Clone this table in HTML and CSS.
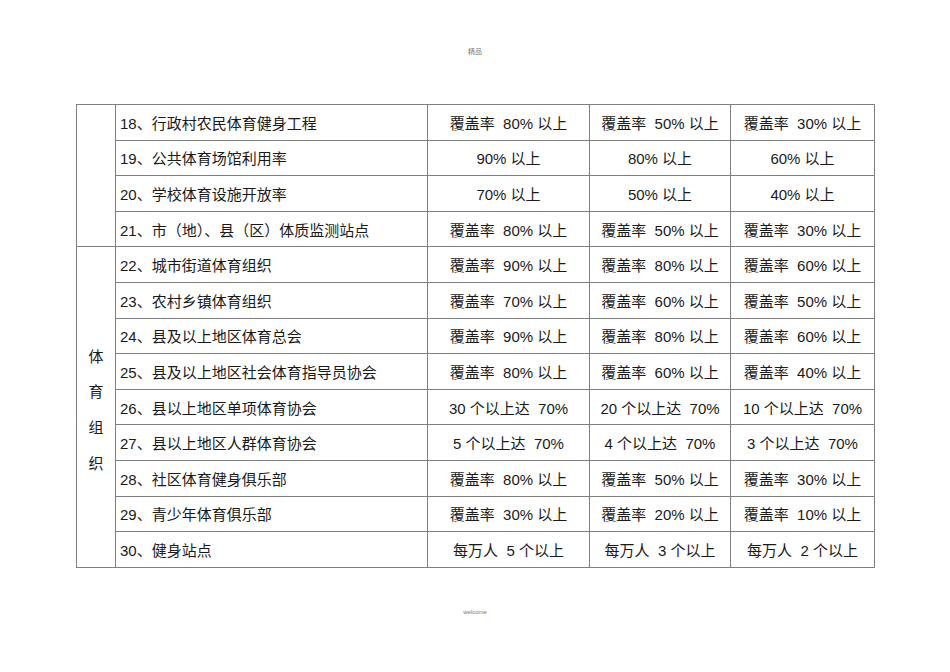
FILE: index.html
```html
<!DOCTYPE html>
<html lang="zh">
<head>
<meta charset="utf-8">
<title>体育组织</title>
<link rel="stylesheet" href="styles.css">
</head>
<body>
<div class="page">
  <div class="head-note">精品</div>
  <table class="grid">
    <colgroup>
      <col class="c1"><col class="c2"><col class="c3"><col class="c4"><col class="c5">
    </colgroup>
    <tbody>
      <tr><td class="cat" rowspan="4"></td><td class="item">18、行政村农民体育健身工程</td><td>覆盖率&nbsp; 80% 以上</td><td>覆盖率&nbsp; 50% 以上</td><td>覆盖率&nbsp; 30% 以上</td></tr>
      <tr><td class="item">19、公共体育场馆利用率</td><td>90% 以上</td><td>80% 以上</td><td>60% 以上</td></tr>
      <tr><td class="item">20、学校体育设施开放率</td><td>70% 以上</td><td>50% 以上</td><td>40% 以上</td></tr>
      <tr><td class="item">21、市（地）、县（区）体质监测站点</td><td>覆盖率&nbsp; 80% 以上</td><td>覆盖率&nbsp; 50% 以上</td><td>覆盖率&nbsp; 30% 以上</td></tr>
      <tr><td class="cat" rowspan="9"><div class="vert">体<br>育<br>组<br>织</div></td><td class="item">22、城市街道体育组织</td><td>覆盖率&nbsp; 90% 以上</td><td>覆盖率&nbsp; 80% 以上</td><td>覆盖率&nbsp; 60% 以上</td></tr>
      <tr><td class="item">23、农村乡镇体育组织</td><td>覆盖率&nbsp; 70% 以上</td><td>覆盖率&nbsp; 60% 以上</td><td>覆盖率&nbsp; 50% 以上</td></tr>
      <tr><td class="item">24、县及以上地区体育总会</td><td>覆盖率&nbsp; 90% 以上</td><td>覆盖率&nbsp; 80% 以上</td><td>覆盖率&nbsp; 60% 以上</td></tr>
      <tr><td class="item">25、县及以上地区社会体育指导员协会</td><td>覆盖率&nbsp; 80% 以上</td><td>覆盖率&nbsp; 60% 以上</td><td>覆盖率&nbsp; 40% 以上</td></tr>
      <tr><td class="item">26、县以上地区单项体育协会</td><td>30 个以上达&nbsp; 70%</td><td>20 个以上达&nbsp; 70%</td><td>10 个以上达&nbsp; 70%</td></tr>
      <tr><td class="item">27、县以上地区人群体育协会</td><td>5 个以上达&nbsp; 70%</td><td>4 个以上达&nbsp; 70%</td><td>3 个以上达&nbsp; 70%</td></tr>
      <tr><td class="item">28、社区体育健身俱乐部</td><td>覆盖率&nbsp; 80% 以上</td><td>覆盖率&nbsp; 50% 以上</td><td>覆盖率&nbsp; 30% 以上</td></tr>
      <tr><td class="item">29、青少年体育俱乐部</td><td>覆盖率&nbsp; 30% 以上</td><td>覆盖率&nbsp; 20% 以上</td><td>覆盖率&nbsp; 10% 以上</td></tr>
      <tr><td class="item">30、健身站点</td><td>每万人&nbsp; 5 个以上</td><td>每万人&nbsp; 3 个以上</td><td>每万人&nbsp; 2 个以上</td></tr>
    </tbody>
  </table>
  <div class="foot-note">welcome</div>
</div>
</body>
</html>
```
FILE: styles.css
```css
html, body {
  margin: 0;
  padding: 0;
  background: #ffffff;
}

.page {
  width: 950px;
  height: 672px;
  font-family: "Liberation Sans", "Noto Sans CJK SC", sans-serif;
  color: #1a1a1a;
  display: flex;
  flex-direction: column;
  align-items: flex-start;
}

.head-note {
  align-self: center;
  margin-top: 47px;
  height: 10px;
  line-height: 10px;
  font-size: 7px;
  color: #777777;
}

.grid {
  margin-top: 47px;
  margin-left: 76px;
  border-collapse: collapse;
  table-layout: fixed;
  width: 798px;
  font-size: 15px;
}

.c1 { width: 39px; }
.c2 { width: 312px; }
.c3 { width: 162px; }
.c4 { width: 141px; }
.c5 { width: 144px; }

.grid td {
  border: 1px solid #7f7f7f;
  height: 31.6px;
  padding: 3px 0 0 0;
  text-align: center;
  vertical-align: middle;
  white-space: nowrap;
  line-height: 18px;
}

.grid td.item {
  text-align: left;
  padding-left: 4px;
}

.grid td.cat {
  text-align: center;
  padding-top: 0;
}

.vert {
  line-height: 35.7px;
  padding-top: 6px;
}

.foot-note {
  align-self: center;
  margin-top: 40px;
  font-size: 6px;
  line-height: 8px;
  color: #777777;
}
```
